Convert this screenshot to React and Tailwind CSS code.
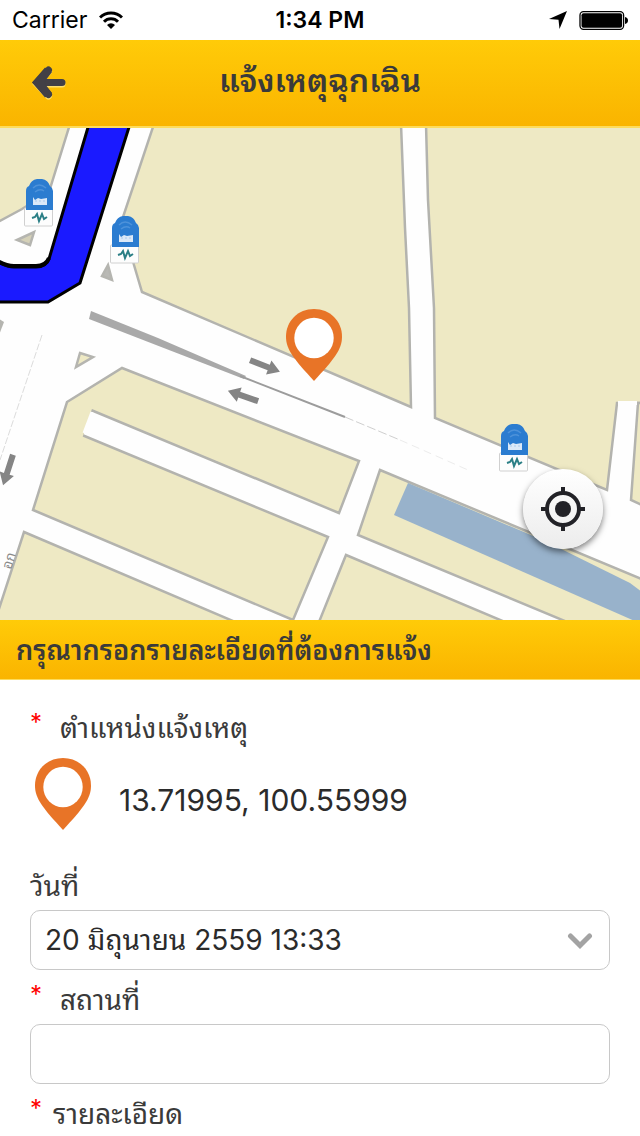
import React, { useState } from 'react';

const dates = ['20 มิถุนายน 2559 13:33', '21 มิถุนายน 2559 13:33'];

const blocks = [
  '-4,124 70,124 49,192 22,209 -4,223',
  '154,124 122,220 134,265 142,292 411,407 409,308 405,228 401,124',
  '426,124 428,200 434,308 435,418 607,490 617,403 644,403 644,124',
  '638,403 631,500 644,506 644,403',
  '67,402 122,368 359,461 339,513 91,410 82,435 328,537 293,620 33,510',
  '24,532 240,624 -4,624 -4,618',
  '346,555 505,622 319,622',
  '380,470 644,580 644,624 572,624 358,535',
];

const StatusBar = () => (
  <div className="grid h-10 grid-cols-3 items-center px-3 text-[23px] text-black">
    <div className="flex items-center gap-3">
      <span>Carrier</span>
      <svg viewBox="0 0 24 18" className="h-[18px] w-6" fill="none" stroke="#000" strokeWidth="3">
        <path d="M1 6.500a15.500 15.500 0 0 1 22 0" />
        <path d="M5 10.800a9.800 9.800 0 0 1 14 0" />
        <path d="M12 18l-4-4a5.600 5.600 0 0 1 8 0z" fill="#000" stroke="none" />
      </svg>
    </div>
    <span className="text-center font-semibold">1:34 PM</span>
    <div className="flex items-center justify-end gap-3">
      <svg viewBox="0 0 18 18" className="h-[18px] w-[18px]">
        <path d="M18 0L10.500 18 9.500 8.800 0 8z" />
      </svg>
      <svg viewBox="0 0 49 19" className="h-[19px] w-[49px]">
        <rect x="1" y="0.700" width="43.600" height="17.600" rx="3.500" fill="#fff" stroke="#000" strokeWidth="1.300" />
        <rect x="2.500" y="2.200" width="40.600" height="14.600" rx="2" />
        <path d="M46 6c2 .4 3 1.700 3 3.500s-1 3.100-3 3.500z" />
      </svg>
    </div>
  </div>
);

const PinIcon = () => (
  <svg viewBox="0 0 56 72" className="h-[72px] w-14">
    <path d="M28 0C12 0 0 12 0 27.500 0 41 8 50 28 72 48 50 56 41 56 27.500 56 12 44 0 28 0z" fill="#e87427" />
    <ellipse cx="28" cy="29" rx="19.700" ry="20.200" fill="#fff" />
  </svg>
);

const AtmMarker = ({ x, y }) => (
  <g transform={`translate(${x} ${y})`}>
    <rect x="-0.500" y="29" width="28" height="18" rx="1" fill="#fdfdfd" stroke="#d0d0d0" />
    <path d="M1 31V12Q1 8 4 7 6 1 12 0h5Q23 1 25 7q3 2 3 5v19z" fill="#2b7cd0" />
    <path d="M8 9q6-6 13 0M10 13q5-4 9-1" fill="none" stroke="#4d92da" strokeWidth="1.500" />
    <path d="M8 18l2 3 3-2 3 1 6-1v7H8z" fill="#dbe9f8" />
    <path d="M11 21v2M15 21v2M19 21v2" stroke="#a9c9ec" />
    <path d="M7 39l3-1 2-3 2 7 3-7 2 5 3-2" fill="none" stroke="#2b7f86" strokeWidth="2" />
  </g>
);

const Arrow = ({ x, y, angle }) => (
  <g transform={`translate(${x} ${y}) rotate(${angle})`} fill="#858585">
    <path d="M-16-3H4V-7.500L16 0 4 7.500V3H-16z" />
  </g>
);

const MapCanvas = () => (
  <svg viewBox="0 128 640 492" preserveAspectRatio="xMidYMid slice" className="block h-full w-full">
    <rect x="0" y="128" width="640" height="492" fill="#fefefe" />
    {blocks.map((points) => (
      <polygon key={points} points={points} fill="#eee9c4" stroke="#b3b3ae" strokeWidth="2.500" />
    ))}
    {/* open road ends */}
    <path d="M91 407L81 437" stroke="#eee9c4" strokeWidth="3" />
    <path d="M92 412L84 433" stroke="#fefefe" strokeWidth="3" />
    <path d="M618 403H637" stroke="#fefefe" strokeWidth="4" />
    {/* canal */}
    <path d="M408 483L545 541 630 583 642 592V622H637L394 515z" fill="#98b2cb" />
    {/* route */}
    <path
      d="M89 124L49 259Q46 267 36 267H14Q6 267-4 261V302H48L80 283 130 124z"
      fill="#1a1aff"
      stroke="#000"
      strokeWidth="3"
    />
    <path d="M49 258Q46 266 36 266H14Q6 266-4 260" fill="none" stroke="#000" strokeWidth="4" />
    {/* median */}
    <path d="M91 311L158 338 246 376 244 379 156 345 89 319z" fill="#a9a9a9" />
    <path d="M240 376L345 417" stroke="#9c9c9c" strokeWidth="2" />
    <path d="M345 417L400 440" stroke="#cfcfcf" strokeDasharray="9 3" />
    <path d="M400 440L468 470" stroke="#ececec" strokeDasharray="8 5" />
    <path d="M42 335L0 460" stroke="#dcdcdc" strokeDasharray="7 2" />
    <Arrow x={265} y={366} angle={21} />
    <Arrow x={243} y={396} angle={199} />
    <Arrow x={8} y={470} angle={108} />
    <g stroke="#b5b5b0" strokeWidth="2.500">
      <path d="M17 240L34 232 30 245z" fill="#d5d1b8" />
      <path d="M102 276L108 265 112 280z" fill="#b9b9b5" />
      <path d="M80 353L93 357 76 367z" fill="#eee9c4" />
    </g>
    <path d="M-1 319L4 322-1 335z" fill="#b5b5b0" />
    <text transform="translate(11 570) rotate(-73)" fontSize="14" fill="#8a8a8a">อก</text>
    <AtmMarker x={25} y={179} />
    <AtmMarker x={111} y={216} />
    <AtmMarker x={500} y={424} />
  </svg>
);

const Asterisk = () => (
  <span className="self-start text-[24px] leading-[30px] text-[#ff0000]">*</span>
);

const FieldLabel = ({ htmlFor, required, children }) => (
  <label htmlFor={htmlFor} className="mb-1 flex h-10 items-center text-[28px] leading-10 text-[#3a3a3a]">
    {required && <span className="flex w-[30px] self-start"><Asterisk /></span>}
    {children}
  </label>
);

const App = () => {
  const [date, setDate] = useState(dates[0]);
  const [place, setPlace] = useState('');

  return (
    <div className="min-h-screen bg-white font-['Inter','Noto_Sans_Thai_Looped','Loma','Noto_Sans_Thai','Noto_Sans',sans-serif]">
      <StatusBar />
      <header className="grid h-[88px] grid-cols-[96px_1fr_96px] items-center border-b-2 border-[#fddc5c] bg-linear-to-b from-[#ffcb08] to-[#fab400]">
        <button type="button" aria-label="กลับ" className="flex h-full items-center pl-8">
          <svg viewBox="0 0 34 34" className="h-[34px] w-[34px]" strokeLinecap="round">
            <g fill="none" stroke="#ffdf6b" strokeWidth="7">
              <path d="M16.500 5.500L5 18l11.500 12M6 18h24" />
            </g>
            <path d="M16.500 4L5 16.500l11.500 12M6 16.500h24" fill="none" stroke="#424046" strokeWidth="7" />
            <path d="M0 16.500L13 1.500 20 6 12 16.500 20 27 13 31.500z" fill="#424046" />
          </svg>
        </button>
        <h1 className="pb-1 text-center text-[32px] font-semibold text-[#3a3a3a]">แจ้งเหตุฉุกเฉิน</h1>
      </header>

      <div className="relative h-[492px] overflow-hidden">
        <MapCanvas />
        <div className="absolute top-[181px] left-1/2 -ml-[34px]">
          <PinIcon />
        </div>
        <button
          type="button"
          aria-label="ตำแหน่งปัจจุบัน"
          className="absolute right-[37px] bottom-[71px] flex h-20 w-20 items-center justify-center rounded-full bg-linear-to-b from-white to-[#ececec] shadow-[0_3px_6px_rgba(0,0,0,0.5)]"
        >
          <svg viewBox="0 0 44 44" className="h-11 w-11" fill="none" stroke="#222227" strokeWidth="4">
            <circle cx="22" cy="22" r="16" />
            <circle cx="22" cy="22" r="8" fill="#222227" stroke="none" />
            <path d="M22 0v6M22 38v6M0 22h6M38 22h6" />
          </svg>
        </button>
      </div>

      <h2 className="h-15 border-b border-[#fddc5c] bg-linear-to-b from-[#ffcb08] to-[#fab400] px-4 text-[27px] leading-[62px] font-semibold text-[#3a3a3a]">
        กรุณากรอกรายละเอียดที่ต้องการแจ้ง
      </h2>

      <form className="px-[30px] pt-7">
        <FieldLabel htmlFor="position" required>ตำแหน่งแจ้งเหตุ</FieldLabel>
        <div className="mt-[10px] flex items-end gap-7 pl-[5px]">
          <PinIcon />
          <output id="position" className="text-[30px] leading-[60px] text-[#2b2b2b]">13.71995, 100.55999</output>
        </div>
        <div className="mt-9">
          <FieldLabel htmlFor="date">วันที่</FieldLabel>
          <div className="relative">
            <select
              id="date"
              value={date}
              onChange={(e) => setDate(e.target.value)}
              className="h-15 w-full appearance-none rounded-[10px] border border-[#c8c8c8] bg-white px-[14px] text-[28px] text-[#2b2b2b]"
            >
              {dates.map((d) => (
                <option key={d}>{d}</option>
              ))}
            </select>
            <svg viewBox="0 0 26 18" className="pointer-events-none absolute top-[22px] right-[17px] h-[18px] w-[26px]" fill="none">
              <path d="M3.500 4L13 13.500 22.500 4" stroke="#a3a3a3" strokeWidth="5" strokeLinecap="round" />
            </svg>
          </div>
        </div>
        <div className="mt-[10px]">
          <FieldLabel htmlFor="place" required>สถานที่</FieldLabel>
          <input
            id="place"
            type="text"
            value={place}
            onChange={(e) => setPlace(e.target.value)}
            className="block h-15 w-full rounded-[10px] border border-[#c8c8c8] bg-white px-[14px] text-[28px] text-[#2b2b2b]"
          />
        </div>
        <p className="mt-[10px] flex h-10 items-center text-[28px] leading-10 text-[#3a3a3a]">
          <span className="flex w-[23px] self-start"><Asterisk /></span>
          รายละเอียด
        </p>
      </form>
    </div>
  );
};

export default App;
